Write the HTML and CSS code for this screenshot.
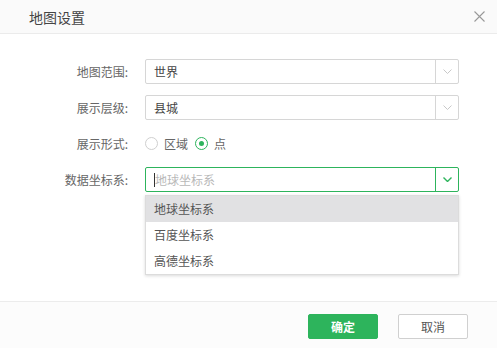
FILE: index.html
```html
<!DOCTYPE html>
<html lang="zh-CN">
<head>
    <meta charset="UTF-8">
    <title>地图设置</title>
    <link rel="stylesheet" href="styles.css">
</head>
<body>
    <div class="dialog">
        <div class="dialog-header">
            <span class="dialog-title">地图设置</span>
            <span class="close">
                <svg width="11" height="11" viewBox="0 0 11 11"><path d="M0.5 0.5L10.5 10.5M10.5 0.5L0.5 10.5" stroke="#999" stroke-width="1.1" fill="none"/></svg>
            </span>
        </div>

        <div class="dialog-body">
            <div class="form-row">
                <label class="form-label">地图范围:</label>
                <div class="select">
                    <span class="select-value">世界</span>
                    <span class="select-arrow">
                        <svg width="9" height="5" viewBox="0 0 9 5"><path d="M0.5 0.5L4.5 4.5L8.5 0.5" stroke="#c8c8c8" fill="none"/></svg>
                    </span>
                </div>
            </div>

            <div class="form-row">
                <label class="form-label">展示层级:</label>
                <div class="select">
                    <span class="select-value">县城</span>
                    <span class="select-arrow">
                        <svg width="9" height="5" viewBox="0 0 9 5"><path d="M0.5 0.5L4.5 4.5L8.5 0.5" stroke="#c8c8c8" fill="none"/></svg>
                    </span>
                </div>
            </div>

            <div class="form-row">
                <label class="form-label">展示形式:</label>
                <div class="radio-group">
                    <span class="radio"><span class="radio-dot"></span>区域</span>
                    <span class="radio checked"><span class="radio-dot"></span>点</span>
                </div>
            </div>

            <div class="form-row">
                <label class="form-label">数据坐标系:</label>
                <div class="select-wrap">
                    <div class="select focused">
                        <span class="select-value placeholder"><span class="caret"></span>地球坐标系</span>
                        <span class="select-arrow">
                            <svg width="9" height="5" viewBox="0 0 9 5"><path d="M0.5 0.5L4.5 4.5L8.5 0.5" stroke="#2db45c" stroke-width="1.4" fill="none"/></svg>
                        </span>
                    </div>
                    <ul class="dropdown">
                        <li class="active">地球坐标系</li>
                        <li>百度坐标系</li>
                        <li>高德坐标系</li>
                    </ul>
                </div>
            </div>
        </div>

        <div class="dialog-footer">
            <button class="btn btn-primary">确定</button>
            <button class="btn">取消</button>
        </div>
    </div>
</body>
</html>
```

FILE: styles.css
```css
body {
    margin: 0;
    padding: 0;
    font-family: "Noto Sans CJK SC", "Noto Sans", sans-serif;
    font-size: 12px;
    color: #333;
    background: #fff;
}
.dialog {
    width: 497px;
    height: 348px;
    display: flex;
    flex-direction: column;
    background: #fff;
}
.dialog-header {
    height: 33px;
    flex: none;
    display: flex;
    align-items: center;
    justify-content: space-between;
    padding: 0 12px 0 29px;
    background: #fafafa;
    border-bottom: 1px solid #ebebeb;
}
.dialog-title {
    font-size: 14px;
    color: #444;
}
.close {
    display: flex;
    margin-top: -1px;
}
.dialog-body {
    flex: 1;
    padding-top: 25px;
    display: flex;
    flex-direction: column;
    gap: 11px;
}
.form-row {
    display: flex;
    align-items: center;
    height: 25px;
}
.form-label {
    flex: none;
    width: 145px;
    padding-right: 17px;
    box-sizing: border-box;
    text-align: right;
    color: #666;
}
.select-wrap {
    position: relative;
}
.select {
    width: 314px;
    height: 25px;
    box-sizing: border-box;
    border: 1px solid #d6d6d6;
    border-radius: 2px;
    display: flex;
    align-items: center;
    background: #fff;
}
.select.focused {
    border-color: #2db45c;
}
.select-value {
    flex: 1;
    padding-left: 8px;
    color: #444;
    display: flex;
    align-items: center;
}
.select-value.placeholder {
    color: #b8b8b8;
}
.caret {
    width: 1px;
    height: 14px;
    background: #333;
}
.select-arrow {
    width: 22px;
    height: 100%;
    border-left: 1px solid #d6d6d6;
    display: flex;
    align-items: center;
    justify-content: center;
}
.select.focused .select-arrow {
    border-left-color: #2db45c;
}
.radio-group {
    display: flex;
    align-items: center;
    gap: 7px;
}
.radio {
    display: flex;
    align-items: center;
    gap: 6px;
    color: #666;
}
.radio-dot {
    width: 13px;
    height: 13px;
    box-sizing: border-box;
    border: 1px solid #cfcfcf;
    border-radius: 50%;
    position: relative;
}
.radio.checked .radio-dot {
    border-color: #2db45c;
}
.radio.checked .radio-dot::after {
    content: "";
    position: absolute;
    left: 3px;
    top: 3px;
    width: 5px;
    height: 5px;
    border-radius: 50%;
    background: #2db45c;
}
.dropdown {
    position: absolute;
    left: 0;
    top: 28px;
    width: 314px;
    margin: 0;
    padding: 0;
    list-style: none;
    box-sizing: border-box;
    background: #fff;
    border: 1px solid #dcdcdc;
    box-shadow: 0 1px 3px rgba(0, 0, 0, 0.15);
}
.dropdown li {
    height: 26px;
    line-height: 26px;
    padding-left: 8px;
    color: #555;
}
.dropdown li.active {
    background: #e1e1e3;
}
.dialog-footer {
    height: 47px;
    flex: none;
    display: flex;
    justify-content: flex-end;
    align-items: flex-start;
    gap: 20px;
    padding: 12px 29px 0 0;
    box-sizing: border-box;
    background: #fcfcfc;
    border-top: 1px solid #ececec;
}
.btn {
    width: 70px;
    height: 25px;
    border: 1px solid #d0d0d0;
    border-radius: 2px;
    background: #fff;
    color: #555;
    font-family: inherit;
    font-size: 12px;
    padding: 0;
    cursor: pointer;
}
.btn-primary {
    background: #2db45c;
    border-color: #2db45c;
    color: #fff;
    font-weight: bold;
}
```
